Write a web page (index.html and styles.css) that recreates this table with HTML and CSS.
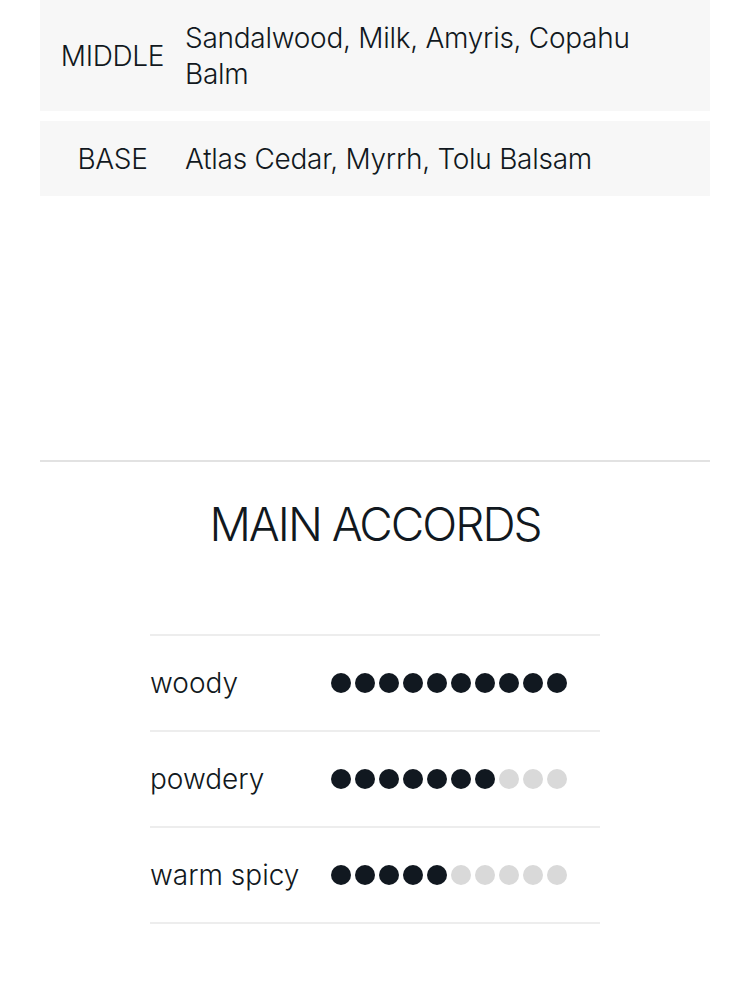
FILE: index.html
```html
<!DOCTYPE html>
<html lang="en">
<head>
<meta charset="utf-8">
<link rel="stylesheet" href="styles.css">
</head>
<body>
<div class="page">
  <div class="notes">
    <div class="note-row">
      <div class="note-label">MIDDLE</div>
      <div class="note-text">Sandalwood, Milk, Amyris, Copahu Balm</div>
    </div>
    <div class="note-row">
      <div class="note-label">BASE</div>
      <div class="note-text">Atlas Cedar, Myrrh, Tolu Balsam</div>
    </div>
  </div>

  <hr class="divider">

  <h2 class="section-title">MAIN ACCORDS</h2>

  <div class="accords">
    <div class="accord">
      <span class="accord-name">woody</span>
      <span class="dots">
        <i class="dot on"></i><i class="dot on"></i><i class="dot on"></i><i class="dot on"></i><i class="dot on"></i><i class="dot on"></i><i class="dot on"></i><i class="dot on"></i><i class="dot on"></i><i class="dot on"></i>
      </span>
    </div>
    <div class="accord">
      <span class="accord-name">powdery</span>
      <span class="dots">
        <i class="dot on"></i><i class="dot on"></i><i class="dot on"></i><i class="dot on"></i><i class="dot on"></i><i class="dot on"></i><i class="dot on"></i><i class="dot"></i><i class="dot"></i><i class="dot"></i>
      </span>
    </div>
    <div class="accord">
      <span class="accord-name">warm spicy</span>
      <span class="dots">
        <i class="dot on"></i><i class="dot on"></i><i class="dot on"></i><i class="dot on"></i><i class="dot on"></i><i class="dot"></i><i class="dot"></i><i class="dot"></i><i class="dot"></i><i class="dot"></i>
      </span>
    </div>
  </div>
</div>
</body>
</html>
```

FILE: styles.css
```css
html, body {
  margin: 0;
  padding: 0;
  background: #ffffff;
}

body {
  font-family: "Inter Light", Inter, "Liberation Sans", sans-serif;
  font-weight: 300;
  color: #111820;
}

.page {
  padding: 0 40px;
}

.notes {
  display: flex;
  flex-direction: column;
  gap: 10px;
}

.note-row {
  display: flex;
  align-items: center;
  background: #f7f7f7;
  padding: 20px 0 19px;
}

.note-label {
  flex: 0 0 145px;
  text-align: center;
  font-size: 28px;
  line-height: 36px;
  letter-spacing: -0.3px;
}

.note-text {
  flex: 1;
  font-size: 28px;
  line-height: 36px;
  letter-spacing: -0.27px;
  padding-right: 60px;
}

.divider {
  border: 0;
  border-top: 2px solid #e2e2e2;
  margin: 264px 0 0;
}

.section-title {
  margin: 37px 0 0;
  text-align: center;
  font-size: 46px;
  font-weight: 300;
  line-height: 50px;
  letter-spacing: -2px;
}

.accords {
  width: 450px;
  margin: 85px auto 0;
  border-top: 2px solid #ededed;
}

.accord {
  display: flex;
  align-items: center;
  height: 94px;
  border-bottom: 2px solid #ededed;
}

.accord-name {
  flex: 0 0 181px;
  font-size: 28px;
  line-height: 36px;
}

.dots {
  display: flex;
  gap: 4px;
}

.dot {
  display: block;
  width: 20px;
  height: 20px;
  border-radius: 50%;
  background: #d9d9d9;
}

.dot.on {
  background: #111820;
}
```
